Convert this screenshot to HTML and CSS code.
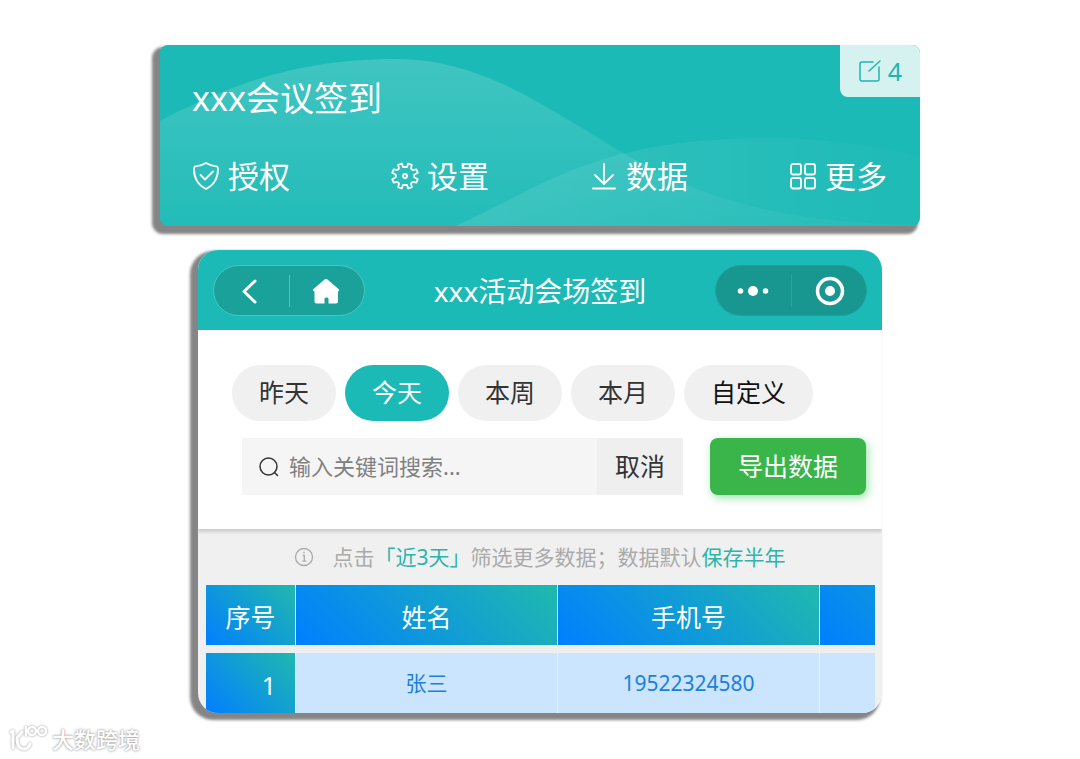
FILE: index.html
```html
<!DOCTYPE html>
<html lang="zh-CN">
<head>
    <meta charset="UTF-8">
    <meta name="viewport" content="width=device-width, initial-scale=1.0">
    <title>xxx会议签到</title>
    <link rel="stylesheet" href="styles.css">
</head>
<body>
    <main class="page">
        <section class="meeting-card">
            <svg class="waves" viewBox="0 0 760 181" preserveAspectRatio="none" aria-hidden="true">
                <defs>
                    <linearGradient id="wave" x1="0" y1="0" x2="0" y2="1">
                        <stop offset="0" stop-color="#fff" stop-opacity="0.16"/>
                        <stop offset="1" stop-color="#fff" stop-opacity="0.03"/>
                    </linearGradient>
                    <linearGradient id="wave2" x1="0" y1="0" x2="1" y2="0">
                        <stop offset="0" stop-color="#fff" stop-opacity="0.11"/>
                        <stop offset="1" stop-color="#fff" stop-opacity="0.01"/>
                    </linearGradient>
                </defs>
                <path fill="url(#wave)" d="M0 76C60 45 130 14 235 14C300 14 350 40 400 70C440 93 470 115 520 137C590 168 670 179 760 180V181H0Z"/>
                <path fill="url(#wave2)" d="M295 181C380 145 430 93 610 93C660 93 720 101 760 112V181Z"/>
            </svg>
            <a class="badge" href="#edit">
                <svg width="22" height="24" viewBox="0 0 22 24" fill="none" stroke="currentColor" stroke-width="1.5" stroke-linecap="round" stroke-linejoin="round" aria-hidden="true">
                    <path d="M14 3H3Q1 3 1 5V20Q1 22 3 22H18Q20 22 20 20V8M10 12L21 2"/>
                </svg>
                <span>4</span>
            </a>
            <h1 class="meeting-title">xxx会议签到</h1>
            <nav class="actions">
                <a href="#auth">
                    <svg width="28" height="30" viewBox="0 0 28 30" aria-hidden="true">
                        <path d="M14 2C10 4.500 6 5 3 5.500Q2 6 2 8C2 18 6 24 14 28C22 24 26 18 26 8Q26 6 25 5.500C22 5 18 4.500 14 2Z"/>
                        <path d="M8.500 14L13 18.500L21 10.500"/>
                    </svg>
                    授权
                </a>
                <a href="#settings">
                    <svg width="28" height="30" viewBox="0 0 28 30" aria-hidden="true">
                        <path d="M12 6L10.800 2.500L7.200 3.900L8 7.500L6.300 9.200L2.700 8.300L1.200 11.800L4.800 13.700V16.300L1.200 18.200L2.700 21.700L6.300 20.800L8 22.500L7.200 26.100L10.800 27.500L12 24H16L17.200 27.500L20.800 26.100L20 22.500L21.700 20.800L25.300 21.700L26.800 18.200L23.200 16.300V13.700L26.800 11.800L25.300 8.300L21.700 9.200L20 7.500L20.800 3.900L17.200 2.500L16 6Z"/>
                        <circle cx="14" cy="15" r="2"/>
                    </svg>
                    设置
                </a>
                <a href="#data">
                    <svg width="28" height="30" viewBox="0 0 28 30" aria-hidden="true">
                        <path d="M14 3V23M5 14L14 23L23 14M3 27.500H25"/>
                    </svg>
                    数据
                </a>
                <a href="#more">
                    <svg width="28" height="30" viewBox="0 0 28 30" aria-hidden="true">
                        <rect x="2" y="3" width="10" height="10.500" rx="2"/>
                        <rect x="16" y="3" width="10" height="10.500" rx="2"/>
                        <rect x="2" y="17" width="10" height="10.500" rx="2"/>
                        <rect x="16" y="17" width="10" height="10.500" rx="2"/>
                    </svg>
                    更多
                </a>
            </nav>
        </section>

        <section class="phone">
            <header class="topbar">
                <div class="capsule">
                    <button type="button" aria-label="返回">
                        <svg width="32" height="32" viewBox="0 0 32 32" fill="none" stroke="currentColor" stroke-width="3" stroke-linecap="round" stroke-linejoin="round">
                            <path d="M20 6L9 16.500L20 27"/>
                        </svg>
                    </button>
                    <button type="button" aria-label="首页">
                        <svg width="32" height="32" viewBox="0 0 32 32" fill="currentColor">
                            <path d="M13.500 4.500Q15 3.500 16.500 4.500L27.500 14Q29 15.500 27 16.500V26.500Q27 28.500 25 28.500H17.500V24Q17.500 22.500 16 22.500H15Q13.500 22.500 13.500 24V28.500H5.500Q3.500 28.500 3.500 26.500V16.500Q1 15.500 2.500 14Z"/>
                        </svg>
                    </button>
                </div>
                <h2 class="topbar-title">xxx活动会场签到</h2>
                <div class="capsule capsule-dark">
                    <button type="button" aria-label="菜单">
                        <svg width="32" height="32" viewBox="0 0 32 32" fill="currentColor">
                            <circle cx="3.500" cy="16" r="2.800"/>
                            <circle cx="16" cy="16" r="5"/>
                            <circle cx="28.500" cy="16" r="2.800"/>
                        </svg>
                    </button>
                    <button type="button" aria-label="关闭">
                        <svg width="32" height="32" viewBox="0 0 32 32">
                            <circle cx="17" cy="16" r="12.500" fill="none" stroke="currentColor" stroke-width="3.500"/>
                            <circle cx="17" cy="16" r="5" fill="currentColor"/>
                        </svg>
                    </button>
                </div>
            </header>

            <div class="filters">
                <div class="tabs">
                    <button class="tab" type="button">昨天</button>
                    <button class="tab active" type="button">今天</button>
                    <button class="tab" type="button">本周</button>
                    <button class="tab" type="button">本月</button>
                    <button class="tab custom" type="button">自定义</button>
                </div>
                <div class="search-row">
                    <form class="search">
                        <label class="search-icon" for="keyword" aria-label="搜索">
                            <svg width="20" height="20" viewBox="0 0 20 20" fill="none" stroke="currentColor" stroke-width="1.500" stroke-linecap="round">
                                <circle cx="9.500" cy="9.500" r="8.500"/>
                                <path d="M15.500 15.500L18.500 18.500"/>
                            </svg>
                        </label>
                        <input id="keyword" type="text" placeholder="输入关键词搜索...">
                        <button class="cancel" type="reset">取消</button>
                    </form>
                    <button class="export" type="button">导出数据</button>
                </div>
            </div>

            <p class="hint">
                <svg width="20" height="20" viewBox="0 0 20 20" fill="none" stroke="currentColor" stroke-width="1.300" aria-hidden="true">
                    <circle cx="10" cy="10" r="8.500"/>
                    <path d="M8.800 8.500H10.300V14M8.300 14.200H12.200M10 4.800V6.500"/>
                </svg>
                <span>点击<em>「近3天」</em>筛选更多数据；数据默认<em>保存半年</em></span>
            </p>

            <div class="table-wrap">
                <table>
                    <colgroup>
                        <col class="col-no">
                        <col class="col-data">
                        <col class="col-data">
                        <col class="col-data">
                    </colgroup>
                    <thead>
                        <tr><th>序号</th><th>姓名</th><th>手机号</th><th></th></tr>
                    </thead>
                    <tbody>
                        <tr><th scope="row">1</th><td>张三</td><td>19522324580</td><td></td></tr>
                    </tbody>
                </table>
            </div>
        </section>
    </main>

    <footer class="brand">
        <svg width="40" height="30" viewBox="0 0 40 30" fill="none" stroke="#fff" stroke-width="3" stroke-linecap="round" stroke-linejoin="round" aria-hidden="true">
            <path d="M3 8L5 7V24M14 8L9 14C9 21 11 25 16 25C19 25 21 23 22 20"/>
            <path stroke-width="2.500" d="M18 3V11"/>
            <circle cx="24" cy="7" r="4" stroke-width="2.500"/>
            <circle cx="34" cy="7" r="4" stroke-width="2.500"/>
        </svg>
        <span>大数跨境</span>
    </footer>
</body>
</html>
```
FILE: styles.css
```css
* {
    box-sizing: border-box;
}

body {
    margin: 0;
    background-color: #fff;
    font-family: "Noto Sans", "Noto Sans CJK SC", sans-serif;
    color: #333;
}

h1, h2, p {
    margin: 0;
    font-weight: 400;
}

a {
    color: inherit;
    text-decoration: none;
}

button, input {
    border: 0;
    padding: 0;
    background: none;
    font: inherit;
    color: inherit;
}

button {
    cursor: pointer;
}

svg {
    display: block;
    flex-shrink: 0;
}

.page {
    display: flex;
    flex-direction: column;
    align-items: center;
    gap: 24px;
    padding-top: 45px;
}

/* Meeting card */
.meeting-card {
    position: relative;
    width: 100%;
    max-width: 760px;
    padding: 33px 33px 30px 32px;
    border-radius: 8px;
    background-color: #1cbab6;
    color: #fff;
    box-shadow: -5px 5px 3px 3px #858585;
}

.waves {
    position: absolute;
    top: 0;
    left: 0;
    width: 100%;
    height: 100%;
    border-radius: 8px;
}

.badge {
    position: absolute;
    top: 0;
    right: 0;
    display: flex;
    align-items: center;
    gap: 7px;
    padding: 8px 18px 8px 19px;
    border-radius: 0 8px 0 8px;
    background-color: #d5f1f0;
    color: #22b5b0;
    font-size: 25px;
    line-height: 36px;
}

.meeting-title {
    position: relative;
    margin-bottom: 38px;
    font-size: 34px;
    line-height: 40px;
}

.actions {
    position: relative;
    display: flex;
    justify-content: space-between;
}

.actions a {
    display: flex;
    align-items: center;
    gap: 8px;
    font-size: 31px;
    line-height: 40px;
}

.actions svg {
    fill: none;
    stroke: #fff;
    stroke-width: 1.8;
    stroke-linecap: round;
    stroke-linejoin: round;
}

/* Phone screen */
.phone {
    width: 100%;
    max-width: 684px;
    overflow: hidden;
    border-radius: 20px;
    background-color: #f0f0f0;
    box-shadow: -5px 4px 3px 3px #858585;
}

.topbar {
    display: flex;
    align-items: center;
    justify-content: space-between;
    padding: 15px 15px 14px;
    background-color: #1cbab6;
    color: #fff;
}

.topbar-title {
    font-size: 28px;
    line-height: 40px;
}

.capsule {
    display: flex;
    align-items: center;
    width: 152px;
    height: 51px;
    border: 1px solid #4dc4bf;
    border-radius: 26px;
    background-color: #1aa19a;
}

.capsule-dark {
    border-color: #1fa29c;
    background-color: #17978f;
}

.capsule button {
    display: flex;
    flex: 1;
    justify-content: center;
}

.capsule button + button {
    border-left: 1px solid #5dbdb7;
}

.capsule-dark button + button {
    border-left-color: #2f9f98;
}

.filters {
    padding: 35px 16px 34px 34px;
    background-color: #fff;
    box-shadow: 0 3px 3px rgba(0, 0, 0, 0.15);
}

.tabs {
    display: flex;
    gap: 9px;
    margin-bottom: 17px;
}

.tab {
    height: 56px;
    padding: 0 27px 2px;
    border-radius: 28px;
    background-color: #f0f0f0;
    font-size: 25px;
    line-height: 36px;
}

.tab.active {
    background-color: #1cbab6;
    color: #fff;
}

.tab.custom {
    color: #111;
}

.search-row {
    display: flex;
    gap: 27px;
    padding-left: 10px;
}

.search {
    display: flex;
    flex: 1;
    align-items: stretch;
    min-width: 0;
    height: 57px;
    background-color: #f5f5f5;
}

.search-icon {
    display: flex;
    align-items: center;
    padding: 0 10px 0 17px;
}

.search input {
    flex: 1;
    min-width: 0;
    padding-bottom: 2px;
    font-size: 22px;
    outline: none;
}

.search input::placeholder {
    color: #808080;
}

.cancel {
    padding: 0 18px 3px;
    background-color: #efefef;
    font-size: 25px;
}

.export {
    padding: 0 28px 3px;
    border-radius: 8px;
    background-color: #39b54a;
    box-shadow: 2px 3px 8px rgba(57, 200, 90, 0.5);
    color: #fff;
    font-size: 25px;
}

.hint {
    display: flex;
    align-items: center;
    justify-content: center;
    gap: 18px;
    height: 56px;
    color: #aaa;
    font-size: 21px;
    line-height: 30px;
}

.hint em {
    color: #2bb5ad;
    font-style: normal;
}

/* The last column runs past the edge and is cut off */
.table-wrap {
    margin: 0 7px 0 8px;
    overflow: hidden;
}

table {
    width: 876px;
    table-layout: fixed;
    border-spacing: 0;
}

.col-no {
    width: 90px;
}

.col-data {
    width: 262px;
}

th, td {
    height: 60px;
    padding: 0;
    border-right: 1px solid #f0f0f0;
    text-align: center;
}

th {
    background: linear-gradient(45deg, #007fff, #20b9ae) padding-box;
    color: #fff;
    font-size: 25px;
    font-weight: 400;
    line-height: 36px;
}

thead th {
    height: 68px;
    padding-top: 4px;
    border-bottom: 8px solid #eee;
}

tbody th {
    padding: 4px 19px 0 0;
    text-align: right;
}

td {
    background-color: #cbe5fe;
    color: #1b80db;
    font-size: 21px;
    line-height: 30px;
}

/* Brand mark */
.brand {
    display: flex;
    align-items: center;
    gap: 4px;
    margin-top: 11px;
    padding-left: 8px;
    color: #fff;
    font-size: 22px;
    font-weight: 500;
    line-height: 28px;
    text-shadow: 0 0 2px #999, 0 0 3px #bbb;
}

.brand svg {
    filter: drop-shadow(0 0 1px #999);
}
```
